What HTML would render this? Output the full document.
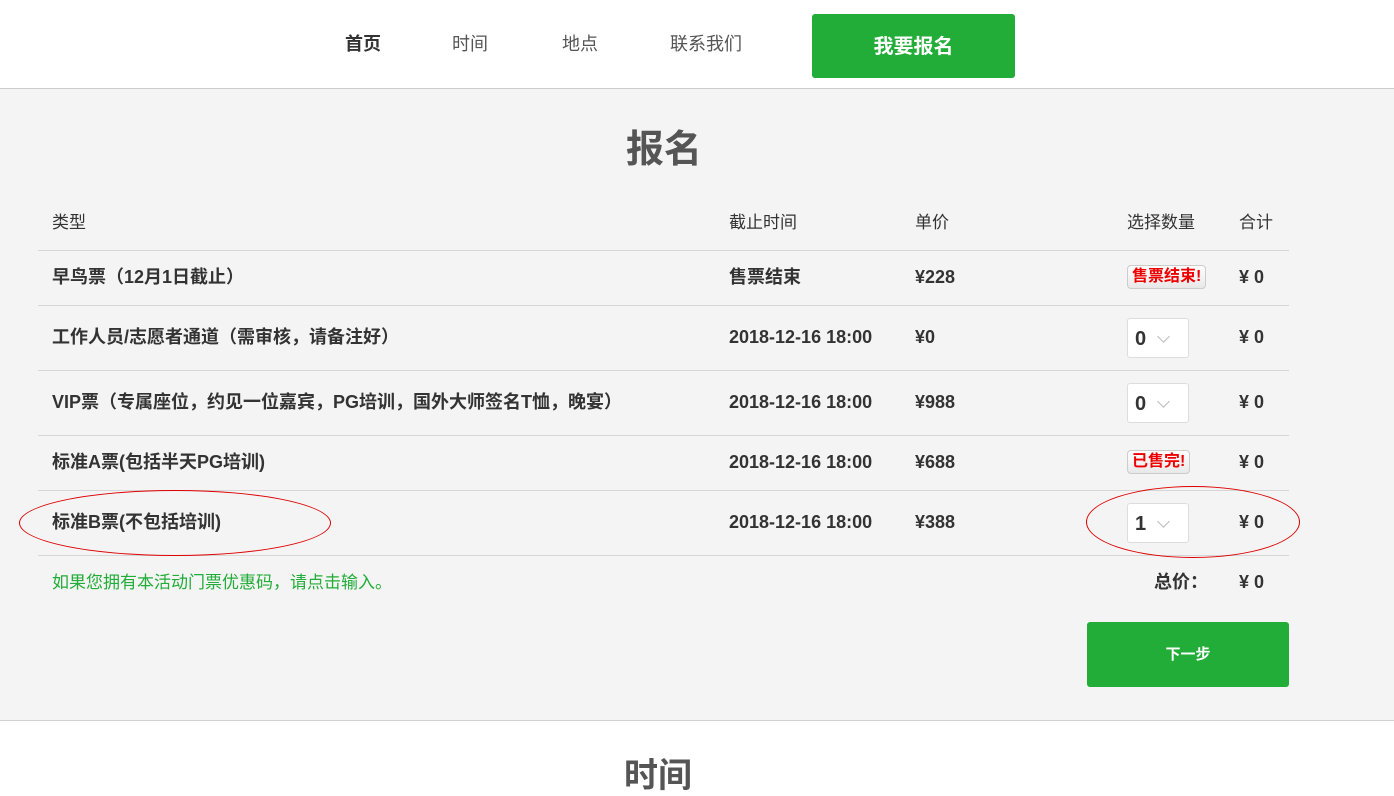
<!DOCTYPE html><html><head><meta charset="utf-8"><style>
body{margin:0;width:1394px;height:766px;overflow:hidden;background:#fff;font-family:"Liberation Sans","Noto Sans CJK SC",sans-serif;color:#333;position:relative}
.a{position:absolute;white-space:nowrap;line-height:22px}
.nav{font-size:18px;color:#555;top:33px}
.main{position:absolute;top:88px;left:0;width:1394px;height:631px;background:#f4f4f4;border-top:1px solid #ccc;border-bottom:1px solid #d0d0d0}
.line{position:absolute;left:38px;width:1251px;height:1px;background:#d6d6d6}
.b{font-weight:bold;font-size:18px;color:#333}
.h{font-size:17px;color:#333}
.sel{position:absolute;width:62px;height:40px;background:#fff;border:1px solid #ddd;border-radius:3px;box-sizing:border-box;font-size:20px;font-weight:bold;line-height:40px;padding-left:7px;color:#333}
.sel:after{content:"";position:absolute;right:20px;top:13px;width:8px;height:8px;border-right:1.5px solid #bbb;border-bottom:1.5px solid #bbb;transform:rotate(45deg)}
.tag{position:absolute;height:24px;border:1px solid #ccc;border-radius:4px;background:linear-gradient(#fff,#e8e8e8);color:#e00;font-weight:bold;font-size:16px;line-height:22px;padding:0 4px;box-sizing:border-box}
</style></head><body>
<div class="a nav" style="left:345px;font-weight:bold;color:#333">首页</div>
<div class="a nav" style="left:452px">时间</div>
<div class="a nav" style="left:562px">地点</div>
<div class="a nav" style="left:670px">联系我们</div>
<div class="a" style="left:812px;top:14px;width:203px;height:64px;background:#22ac38;border-radius:3px;color:#fff;font-size:20px;font-weight:bold;text-align:center;line-height:66px">我要报名</div>
<div class="main"></div>
<div class="a" style="left:626px;top:128px;font-size:38px;line-height:44px;font-weight:bold;color:#555">报名</div>
<div class="a h" style="left:52px;top:212px">类型</div>
<div class="a h" style="left:729px;top:212px">截止时间</div>
<div class="a h" style="left:915px;top:212px">单价</div>
<div class="a h" style="left:1127px;top:212px">选择数量</div>
<div class="a h" style="left:1239px;top:212px">合计</div>
<div class="line" style="top:250px"></div><div class="line" style="top:305px"></div><div class="line" style="top:370px"></div><div class="line" style="top:435px"></div><div class="line" style="top:490px"></div><div class="line" style="top:555px"></div>
<div class="a b" style="left:52px;top:266px">早鸟票（12月1日截止）</div>
<div class="a b" style="left:729px;top:266px">售票结束</div>
<div class="a b" style="left:915px;top:266px">¥228</div>
<div class="tag" style="left:1127px;top:265px">售票结束!</div>
<div class="a b" style="left:1239px;top:266px">¥ 0</div>
<div class="a b" style="left:52px;top:326px">工作人员/志愿者通道（需审核，请备注好）</div>
<div class="a b" style="left:729px;top:326px">2018-12-16 18:00</div>
<div class="a b" style="left:915px;top:326px">¥0</div>
<div class="sel" style="left:1127px;top:318px">0</div>
<div class="a b" style="left:1239px;top:326px">¥ 0</div>
<div class="a b" style="left:52px;top:391px">VIP票（专属座位，约见一位嘉宾，PG培训，国外大师签名T恤，晚宴）</div>
<div class="a b" style="left:729px;top:391px">2018-12-16 18:00</div>
<div class="a b" style="left:915px;top:391px">¥988</div>
<div class="sel" style="left:1127px;top:383px">0</div>
<div class="a b" style="left:1239px;top:391px">¥ 0</div>
<div class="a b" style="left:52px;top:451px">标准A票(包括半天PG培训)</div>
<div class="a b" style="left:729px;top:451px">2018-12-16 18:00</div>
<div class="a b" style="left:915px;top:451px">¥688</div>
<div class="tag" style="left:1127px;top:450px">已售完!</div>
<div class="a b" style="left:1239px;top:451px">¥ 0</div>
<div class="a b" style="left:52px;top:511px">标准B票(不包括培训)</div>
<div class="a b" style="left:729px;top:511px">2018-12-16 18:00</div>
<div class="a b" style="left:915px;top:511px">¥388</div>
<div class="sel" style="left:1127px;top:503px">1</div>
<div class="a b" style="left:1239px;top:511px">¥ 0</div>
<div class="a" style="left:19px;top:490px;width:310px;height:64px;border:1.5px solid #d00;border-radius:50%"></div>
<div class="a" style="left:1086px;top:486px;width:212px;height:70px;border:1.5px solid #d00;border-radius:50%"></div>
<div class="a" style="left:52px;top:572px;font-size:17px;color:#22ac38">如果您拥有本活动门票优惠码，请点击输入。</div>
<div class="a b" style="left:1154px;top:571px">总价：</div>
<div class="a b" style="left:1239px;top:571px">¥ 0</div>
<div class="a" style="left:1087px;top:622px;width:202px;height:65px;background:#22ac38;border-radius:3px;color:#fff;font-size:15px;font-weight:bold;text-align:center;line-height:65px">下一步</div>
<div class="a" style="left:624px;top:756px;font-size:34px;line-height:40px;font-weight:bold;color:#555">时间</div>
</body></html>
